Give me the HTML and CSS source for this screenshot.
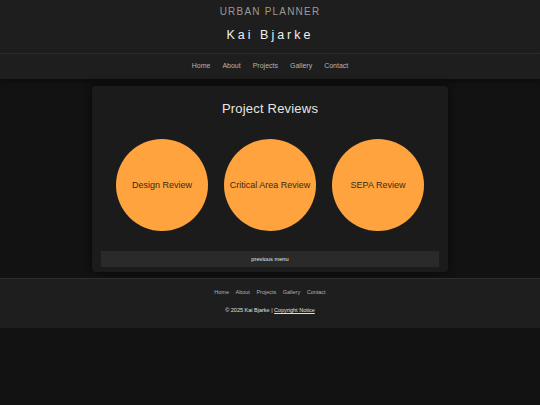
FILE: index.html
```html
<!DOCTYPE html>
<html lang="en">
<head>
<meta charset="utf-8">
<title>Kai Bjarke - Project Reviews</title>
<link rel="stylesheet" href="styles.css">
</head>
<body>
<header class="site-header">
  <div class="role">URBAN PLANNER</div>
  <h1 class="name">Kai Bjarke</h1>
</header>
<nav class="main-nav">
  <a href="#">Home</a>
  <a href="#">About</a>
  <a href="#">Projects</a>
  <a href="#">Gallery</a>
  <a href="#">Contact</a>
</nav>
<main class="content">
  <section class="card">
    <h2 class="card-title">Project Reviews</h2>
    <div class="circles">
      <a class="circle" href="#">Design Review</a>
      <a class="circle" href="#">Critical Area Review</a>
      <a class="circle" href="#">SEPA Review</a>
    </div>
    <a class="back-btn" href="#">previous menu</a>
  </section>
</main>
<footer class="site-footer">
  <nav class="footer-nav">
    <a href="#">Home</a>
    <a href="#">About</a>
    <a href="#">Projects</a>
    <a href="#">Gallery</a>
    <a href="#">Contact</a>
  </nav>
  <p class="copy">© 2025 Kai Bjarke | <a href="#">Copyright Notice</a></p>
</footer>
</body>
</html>
```

FILE: styles.css
```css
* { box-sizing: border-box; }
html, body {
  margin: 0;
  padding: 0;
  background: #121212;
  font-family: "Liberation Sans", Arial, sans-serif;
  color: #ddd;
}
a { text-decoration: none; }

.site-header {
  background: #1e1e1e;
  text-align: center;
  padding: 6px 0 11px;
  border-bottom: 1px solid #2e2e2e;
}
.role {
  font-size: 10px;
  line-height: 12px;
  letter-spacing: 1.2px;
  color: #9a9a9a;
}
.name {
  margin: 10px 0 0;
  font-size: 12.5px;
  line-height: 14px;
  font-weight: normal;
  letter-spacing: 3px;
  color: #f0f0f0;
}

.main-nav {
  background: #1e1e1e;
  display: flex;
  justify-content: center;
  gap: 12px;
  padding: 8px 0 9px;
  line-height: 8px;
  box-shadow: 0 2px 6px rgba(0,0,0,0.4);
}
.main-nav a {
  font-size: 7px;
  color: #b5b5b5;
}

.content {
  padding: 7px 0 6px;
}
.card {
  width: 356px;
  margin: 0 auto;
  background: #1b1b1b;
  border-radius: 4px;
  padding: 15px 9px 5px;
  box-shadow: 0 0 8px rgba(0,0,0,0.6);
}
.card-title {
  margin: 0;
  text-align: center;
  font-size: 13px;
  line-height: 15px;
  font-weight: normal;
  letter-spacing: 0.2px;
  color: #e6e6e6;
}
.circles {
  display: flex;
  justify-content: center;
  gap: 16px;
  margin: 23px 0 20px;
}
.circle {
  width: 92px;
  height: 92px;
  border-radius: 50%;
  background: #ffa33f;
  display: flex;
  align-items: center;
  justify-content: center;
  font-size: 9px;
  color: #3a2a14;
}
.back-btn {
  display: block;
  background: #2a2a2a;
  text-align: center;
  font-size: 5.7px;
  line-height: 16px;
  color: #e8e8e8;
}

.site-footer {
  background: #1e1e1e;
  border-top: 1px solid #2e2e2e;
  padding: 9px 0 14px;
  text-align: center;
}
.footer-nav {
  display: flex;
  justify-content: center;
  gap: 6.5px;
  line-height: 8px;
}
.footer-nav a {
  font-size: 5.5px;
  color: #b0b0b0;
}
.copy {
  margin: 10px 0 0;
  font-size: 5.5px;
  line-height: 8px;
  color: #e0e0e0;
}
.copy a {
  color: #e0e0e0;
  text-decoration: underline;
}
```
